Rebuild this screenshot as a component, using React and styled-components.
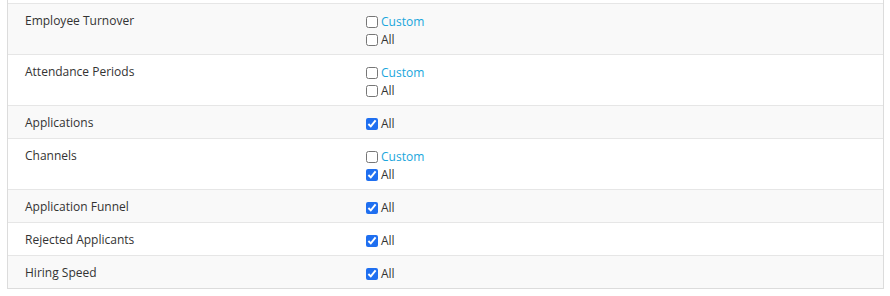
import React from "react";
import styled, { createGlobalStyle } from "styled-components";

const rows = [
   { label: "Employee Turnover", custom: false, all: false, hasCustom: true },
   { label: "Attendance Periods", custom: false, all: false, hasCustom: true },
   { label: "Applications", all: true },
   { label: "Channels", custom: false, all: true, hasCustom: true },
   { label: "Application Funnel", all: true },
   { label: "Rejected Applicants", all: true },
   { label: "Hiring Speed", all: true },
];

const App = () => {
   return (
      <>
         <GlobalStyle />
         <PageWrapper>
            <Table>
               <PrevRowTail />
               {rows.map((row, i) => (
                  <Row key={row.label} $striped={i % 2 === 0}>
                     <LabelCell>{row.label}</LabelCell>
                     <ValueCell>
                        {row.hasCustom && (
                           <Option>
                              <Check type="checkbox" defaultChecked={row.custom} />
                              <CustomLink>Custom</CustomLink>
                           </Option>
                        )}
                        <Option>
                           <Check type="checkbox" defaultChecked={row.all} />
                           <span>All</span>
                        </Option>
                     </ValueCell>
                  </Row>
               ))}
            </Table>
         </PageWrapper>
      </>
   );
};

const GlobalStyle = createGlobalStyle`
   body {
      margin: 0;
      background: #fff;
      font-family: "Open Sans", "Liberation Sans", sans-serif;
      font-size: 12px;
      color: #333;
   }
`;

const PageWrapper = styled.div`
   padding-left: 7px;
   width: 877px;
`;

const Table = styled.div`
   border: 1px solid #dcdcdc;
   border-top: none;
`;

const PrevRowTail = styled.div`
   height: 3px;
   background: #fff;
`;

const Row = styled.div`
   display: grid;
   grid-template-columns: 341px 1fr;
   border-top: 1px solid #e6e6e6;
   background: ${(p) => (p.$striped ? "#f9f9f9" : "#fff")};
`;

const LabelCell = styled.div`
   padding: 8px 17px 6px;
   line-height: 18px;
`;

const ValueCell = styled.div`
   padding: 9px 17px 5px;
   display: flex;
   flex-direction: column;
`;

const Option = styled.label`
   display: flex;
   align-items: center;
   height: 18px;
   line-height: 18px;
`;

const Check = styled.input`
   width: 12px;
   height: 12px;
   margin: 0 3px 0 0;
   accent-color: #1f6ff0;
`;

const CustomLink = styled.span`
   color: #1aa6dc;
`;

export default App;
